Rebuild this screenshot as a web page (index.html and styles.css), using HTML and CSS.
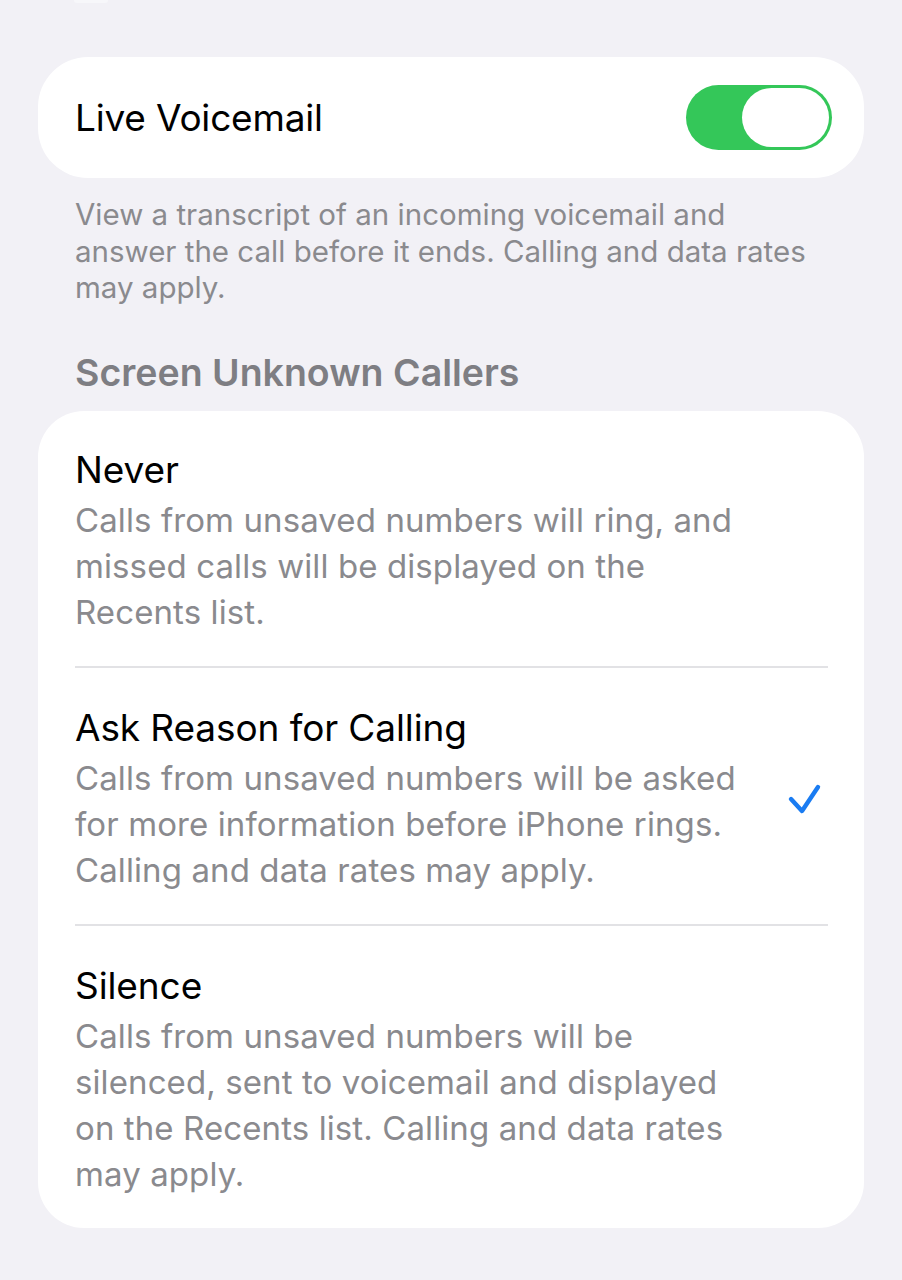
FILE: index.html
```html
<!DOCTYPE html>
<html lang="en">
<head>
<meta charset="utf-8">
<title>Live Voicemail</title>
<link rel="stylesheet" href="styles.css">
</head>
<body>
<div class="page">
  <div class="peek"></div>
  <section class="card toggle-card">
    <span class="row-label">Live Voicemail</span>
    <span class="switch"><span class="knob"></span></span>
  </section>
  <p class="footer">View a transcript of an incoming voicemail and<br>answer the call before it ends. Calling and data rates<br>may apply.</p>
  <h2 class="header">Screen Unknown Callers</h2>
  <section class="card list-card">
    <div class="option">
      <div class="option-text">
        <div class="option-title">Never</div>
        <div class="option-desc">Calls from unsaved numbers will ring, and<br>missed calls will be displayed on the<br>Recents list.</div>
      </div>
    </div>
    <div class="option">
      <div class="option-text">
        <div class="option-title">Ask Reason for Calling</div>
        <div class="option-desc">Calls from unsaved numbers will be asked<br>for more information before iPhone rings.<br>Calling and data rates may apply.</div>
      </div>
      <svg class="check" viewBox="0 0 40 40" width="40" height="40" aria-hidden="true">
        <path d="M7 20 L18 32 L34 8" fill="none" stroke="#1a7cf2" stroke-width="4.4" stroke-linecap="round" stroke-linejoin="round"/>
      </svg>
    </div>
    <div class="option">
      <div class="option-text">
        <div class="option-title">Silence</div>
        <div class="option-desc">Calls from unsaved numbers will be<br>silenced, sent to voicemail and displayed<br>on the Recents list. Calling and data rates<br>may apply.</div>
      </div>
    </div>
  </section>
</div>
</body>
</html>
```

FILE: styles.css
```css
* { box-sizing: border-box; }
html, body {
  margin: 0;
  padding: 0;
  background: #f2f1f6;
}
body {
  font-family: Inter, "Liberation Sans", Arial, sans-serif;
  -webkit-font-smoothing: antialiased;
}
.page {
  width: 902px;
  height: 1280px;
  overflow: hidden;
  padding: 0 38px;
}
.peek {
  width: 34px;
  height: 3px;
  margin-left: 36px;
  background: #f7f7fa;
  border-radius: 0 0 17px 17px;
}
.card {
  background: #ffffff;
}
.toggle-card {
  margin-top: 54px;
  height: 121px;
  border-radius: 50px;
  display: flex;
  align-items: center;
  justify-content: space-between;
  padding: 0 32px 0 37px;
}
.row-label {
  font-size: 37px;
  color: #000;
  letter-spacing: -0.2px;
}
.switch {
  width: 146px;
  height: 65px;
  border-radius: 33px;
  background: #34c759;
  padding: 3px;
  display: flex;
  justify-content: flex-end;
}
.knob {
  width: 87px;
  height: 59px;
  border-radius: 30px;
  background: #fff;
}
.footer {
  margin: 18px 0 0;
  padding-left: 37px;
  font-size: 29.5px;
  line-height: 36.5px;
  color: #8a8a8e;
  white-space: nowrap;
}
.header {
  margin: 47px 0 0;
  padding-left: 37px;
  font-size: 37.5px;
  line-height: 40px;
  font-weight: 600;
  color: #7e7e83;
}
.list-card {
  margin-top: 18px;
  border-radius: 46px;
  padding: 0 36px 0 37px;
}
.option {
  display: flex;
  align-items: center;
  justify-content: space-between;
  padding: 32px 0 31px;
  border-bottom: 2px solid #e2e2e5;
}
.option:last-child {
  border-bottom: none;
}
.option + .option {
  padding-top: 33px;
}
.option-title {
  font-size: 37px;
  line-height: 54px;
  color: #000;
  letter-spacing: -0.1px;
}
.option-desc {
  font-size: 33px;
  line-height: 46px;
  color: #8a8a8e;
  white-space: nowrap;
  letter-spacing: 0.1px;
}
.check {
  flex: none;
  margin-right: 4px;
  margin-top: 4px;
}
```
